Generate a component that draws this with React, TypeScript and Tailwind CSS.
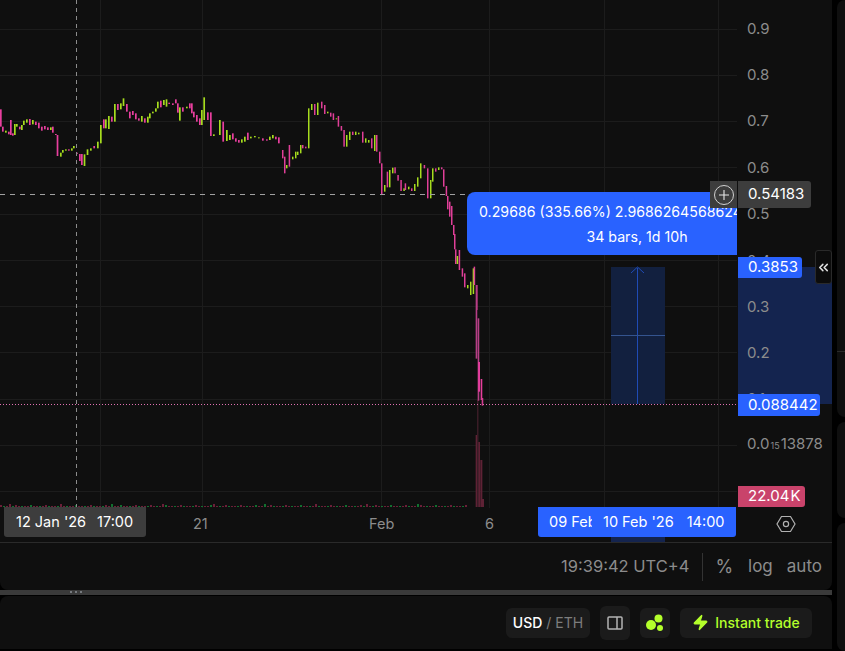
import React from 'react';
import { Zap, ChevronsLeft } from 'lucide-react';

type Candle = [number, number, number, number];

// traced from the chart, [x, top, bottom, green?] in 3x crop coordinates
const LEFT: Candle[] = [
  [0,88,140,0],[6,140,155,0],[15,152,158,1],[24,155,163,0],[30,120,165,0],[36,160,167,0],[42,132,165,1],[48,132,140,1],
  [57,140,148,0],[63,135,150,1],[69,122,135,1],[78,118,128,1],[87,117,135,0],[96,120,133,1],[105,125,135,0],[114,128,145,0],
  [123,140,152,0],[132,138,148,0],[141,142,150,0],[150,142,150,1],[156,140,158,0],[165,162,165,0],[170,165,228,0],[180,218,230,1],
  [186,210,218,1],[195,208,212,1],[204,208,212,0],[213,205,212,1],[219,198,205,1],[228,218,222,0],[237,222,243,0],[243,222,255,0],
  [251,223,258,1],[260,208,225,1],[270,205,212,1],[280,198,205,0],[291,185,205,1],[300,135,190,1],[309,118,145,0],[315,118,145,1],
  [324,108,147,1],[333,110,125,0],[342,72,125,1],[351,72,90,0],[360,70,88,1],[368,55,78,1],[378,72,95,0],[387,95,115,0],
  [396,93,105,0],[405,100,118,0],[414,115,122,0],[423,108,125,1],[432,115,128,0],[441,110,128,1],[447,100,115,1],[456,95,100,1],
  [465,85,95,1],[471,65,85,1],[480,62,82,0],[489,60,75,1],[497,58,80,1],[505,68,72,0],[516,70,75,0],[525,58,70,0],
  [531,70,98,0],[537,82,122,1],[546,82,95,0],[558,80,85,1],[567,70,85,0],[573,70,100,0],[579,95,112,0],[588,105,125,0],
  [597,115,135,0],[603,90,135,1],[610,52,120,1],[621,97,120,0],[630,97,168,0],[639,163,168,1],[657,120,165,1],[667,125,185,0],
  [678,150,183,1],[687,165,180,1],[696,160,178,0],[705,175,185,0],[714,180,188,0],[723,178,188,1],[732,170,185,1],[741,158,180,0],
  [750,170,175,1],[762,168,172,1],[774,172,175,1],[786,175,182,0],[798,178,182,0],[807,170,180,1],[816,165,175,1],[825,170,178,0],
  [834,172,190,0],
];

const MIDDLE: Candle[] = [
  [6,180,205,0],[12,200,250,0],[18,225,235,1],[26,165,230,0],[36,200,208,1],[45,185,205,1],[51,185,195,1],[60,165,190,1],
  [66,165,175,0],[75,170,175,0],[84,55,175,1],[93,42,60,1],[102,42,75,0],[111,38,75,1],[123,35,55,0],[132,45,72,0],
  [141,65,70,1],[150,68,80,0],[158,70,90,0],[167,85,88,1],[173,78,110,0],[182,108,122,0],[190,120,170,0],[198,135,170,1],
  [207,125,150,1],[216,125,135,0],[225,125,135,1],[234,128,133,1],[246,125,158,0],[255,145,158,1],[264,150,158,1],[273,145,175,0],
  [282,135,183,1],[288,135,185,0],[297,185,220,0],[303,220,312,0],[312,285,305,1],[320,245,292,0],[327,240,292,1],[336,233,250,1],
  [343,232,250,0],[352,255,272,0],[361,270,303,0],[370,295,303,1],[374,280,300,0],[384,290,298,1],[393,295,303,0],[402,282,303,1],
  [411,262,290,1],[420,220,265,1],[431,225,235,0],[441,235,325,0],[450,270,325,1],[456,235,275,1],[465,235,245,0],[474,232,240,1],
  [483,232,238,0],[489,238,290,0],[497,288,318,0],[501,318,358,0],[507,335,380,0],[513,348,405,0],[519,405,435,0],[522,432,478,0],
  [525,478,522,0],[530,498,522,1],[536,480,540,0],[545,535,560,0],[552,550,592,0],[561,585,595,1],[570,575,615,1],[578,535,612,1],
  [581,530,585,0],[588,585,660,0],
];

const DROP: [number, number, number, string][] = [
  [107, 15, 236, '#b63f86'],
  [113, 115, 362, '#b63f86'],
  [115, 246, 335, '#f23fa5'],
  [122, 297, 360, '#e83e9c'],
  [125, 354, 377, '#d23d90'],
];

const VOLUME: [number, number][] = [[107, 465], [114, 486], [121, 540], [126, 657]];
const GRID_Y = [29, 75, 121, 167, 214, 260, 306, 352, 399, 445, 491];
const GRID_X = [100, 202, 381, 489, 604, 718];
const TICKS = [
  ['0.9', 28], ['0.8', 74], ['0.7', 120], ['0.6', 167], ['0.5', 213], ['0.4', 260], ['0.3', 306], ['0.2', 352], ['0.1', 398],
] as const;

function Chart() {
  const small = Array.from({ length: 156 }, (_, i) => i * 3);
  return (
    <svg width="737" height="508" className="block">
      {GRID_Y.map((y) => (
        <line key={y} x1="0" x2="737" y1={y + 0.5} y2={y + 0.5} stroke="#1c1c1c" />
      ))}
      {GRID_X.map((x) => (
        <line key={x} x1={x + 0.5} x2={x + 0.5} y1="0" y2="508" stroke="#1c1c1c" />
      ))}

      {/* range tool */}
      <rect x="611" y="267" width="54" height="137" fill="#12203f" />
      <line x1="637.5" x2="637.5" y1="268" y2="404" stroke="#1f4bb5" />
      <line x1="611" x2="665" y1="335.5" y2="335.5" stroke="#34548f" />
      <path d="M631 273L637.5 267L644 273" fill="none" stroke="#1f4bb5" />

      {/* volume */}
      {small.map((x, i) => {
        const h = i % 17 === 3 ? 3 : i % 5 === 0 ? 2 : 1;
        const up = i % 3 === 1;
        return <rect key={x} x={x} y={507 - h} width="2" height={h} fill={up ? '#12702f' : '#6b2038'} />;
      })}
      {VOLUME.map(([x, top]) => (
        <rect key={x} x={440 + x / 3} y={280 + top / 3} width="2" height={507 - 280 - top / 3} fill="#5e2235" />
      ))}
      <rect x="477" y="400" width="1.5" height="107" fill="#3a1c26" />

      {/* candles */}
      {LEFT.map(([x, a, b, g]) => (
        <rect key={`l${x}`} x={x / 3} y={80 + a / 3} width="1.7" height={(b - a) / 3} fill={g ? '#a6dc1e' : '#e83f9e'} />
      ))}
      {MIDDLE.map(([x, a, b, g]) => (
        <rect key={`m${x}`} x={280 + x / 3} y={90 + a / 3} width="1.5" height={(b - a) / 3} fill={g ? '#a6dc1e' : '#e03f98'} />
      ))}
      {DROP.map(([x, a, b, c]) => (
        <rect key={`d${x}`} x={440 + x / 3} y={280 + a / 3} width="1.6" height={(b - a) / 3} fill={c} />
      ))}

      {/* crosshair and last price */}
      <line x1="76.5" x2="76.5" y1="0" y2="508" stroke="#8c8c8c" strokeDasharray="4 4" />
      <line x1="0" x2="710" y1="194.5" y2="194.5" stroke="#a0a0a0" strokeDasharray="5 5" />
      <line x1="0" x2="737" y1="404.5" y2="404.5" stroke="#e070b0" strokeDasharray="1 2" />
    </svg>
  );
}

function PriceAxis() {
  return (
    <div className="relative h-[508px] w-[95px] text-[15px] text-[#8c8c8c]">
      <div className="absolute left-[1px] right-0 top-[267px] h-[137px] bg-[#14244f]" />
      {TICKS.map(([label, y]) => (
        <span key={label} className="absolute left-[10px] leading-none" style={{ top: y - 7 }}>
          {label}
        </span>
      ))}
      <span className="absolute left-[10px] top-[436px] whitespace-nowrap leading-none">
        0.0<span className="mx-[1px] text-[9px]">15</span>13878
      </span>
      <div className="absolute left-[1px] top-[181px] flex h-[27px] w-[73px] items-center rounded-r-[3px] bg-[#3d3d3d] pl-[10px] text-white">
        0.54183
      </div>
      <div className="absolute left-[1px] top-[257px] flex h-[21px] w-[64px] items-center rounded-r-[3px] bg-[#2962ff] pl-[10px] text-white">
        0.3853
      </div>
      <div className="absolute left-[1px] top-[394px] flex h-[22px] w-[82px] items-center rounded-r-[3px] bg-[#2962ff] pl-[10px] text-white">
        0.088442
      </div>
      <div className="absolute left-[1px] top-[486px] flex h-[21px] w-[67px] items-center rounded-r-[3px] bg-[#c9436b] pl-[10px] text-white">
        22.04<span className="ml-[1px]">K</span>
      </div>
      <div className="absolute right-0 top-[250px] flex h-[34px] w-[17px] items-center justify-center rounded-[3px] border border-[#2a2a2a] bg-[#0c0c0c] text-[#e0e0e0]">
        <ChevronsLeft size={15} strokeWidth={2.4} />
      </div>
    </div>
  );
}

function TimeAxis() {
  return (
    <div className="flex h-[34px]">
      <div className="relative h-full w-[737px] text-[14.5px] text-[#8c8c8c]">
        <span className="absolute left-[193px] top-[9px] leading-none">21</span>
        <span className="absolute left-[369px] top-[9px] leading-none">Feb</span>
        <span className="absolute left-[485px] top-[9px] leading-none">6</span>
        <div className="absolute left-[611px] top-[29px] h-[5px] w-[54px] bg-[#14244f]" />
        <div className="absolute left-[4px] top-[-1px] flex h-[30px] w-[142px] items-center gap-[11px] rounded-b-[3px] bg-[#3d3d3d] pl-[12px] text-white">
          <span className="whitespace-nowrap">12 Jan '26</span>
          <span>17:00</span>
        </div>
        <div className="absolute left-[538px] top-[-1px] flex h-[30px] w-[198px] items-center rounded-b-[3px] bg-[#2962ff] pl-[11px] text-white">
          <span className="w-[43px] shrink-0 overflow-hidden whitespace-nowrap">09 Feb</span>
          <span className="ml-[11px] whitespace-nowrap">10 Feb '26</span>
          <span className="ml-[13px]">14:00</span>
        </div>
      </div>
      <div className="flex w-[95px] items-center justify-center pb-[3px] pl-[2px]">
        <svg width="20" height="18" viewBox="0 0 20 18" fill="none" stroke="#b0b0b0" strokeWidth="1.2">
          <path d="M5.5 1.5H14.5L19 9L14.5 16.5H5.5L1 9Z" />
          <circle cx="10" cy="9" r="2.6" />
        </svg>
      </div>
    </div>
  );
}

export default function App() {
  return (
    <div className="flex h-[651px] w-[845px] overflow-hidden bg-black font-['Inter',sans-serif]">
      <div className="flex w-[832px] shrink-0 flex-col">
        <div className="h-[590px] shrink-0 rounded-b-lg bg-[#0f0f0f]">
          <div className="flex h-[508px]">
            <div className="relative h-[508px] w-[737px] overflow-hidden">
              <Chart />
              <div className="absolute left-[467px] top-[192px] h-[63px] w-[270px] overflow-hidden rounded-l-lg bg-[#2962ff] text-[14.2px] text-white">
                <div className="whitespace-nowrap pl-[12px] pt-[11px] leading-[18px]">0.29686 (335.66%) 2.9686264568624</div>
                <div className="mt-[7px] pl-[70px] text-center leading-[18px]">34 bars, 1d 10h</div>
              </div>
              <div className="absolute left-[710px] top-[181px] flex h-[27px] w-[27px] items-center justify-center bg-[#3d3d3d]">
                <div className="flex h-[20px] w-[20px] items-center justify-center rounded-full border border-[#d0d0d0]">
                  <svg width="10" height="10" viewBox="0 0 10 10" stroke="#e8e8e8" strokeWidth="1.1">
                    <path d="M5 0V10M0 5H10" />
                  </svg>
                </div>
              </div>
            </div>
            <PriceAxis />
          </div>
          <TimeAxis />
          <div className="flex h-[48px] items-center justify-end border-t border-[#2a2a2a] pr-[10px] text-[17px] text-[#8c8c8c]">
            <span className="mr-[13px] text-[16.5px]">19:39:42 UTC+4</span>
            <div className="mr-[12px] h-[28px] w-px bg-[#333333]" />
            <span className="mr-[15px] text-[18px]">%</span>
            <span className="mr-[14px]">log</span>
            <span>auto</span>
          </div>
        </div>
        <div className="h-[5px] shrink-0 bg-[#3a3a3a] pl-[70px]">
          <div className="flex h-full items-start gap-[3px] pt-[1px]">
            <i className="h-[2px] w-[2px] rounded-full bg-[#8a8f96]" />
            <i className="h-[2px] w-[2px] rounded-full bg-[#8a8f96]" />
            <i className="h-[2px] w-[2px] rounded-full bg-[#8a8f96]" />
          </div>
        </div>
        <div className="mt-[1px] flex h-[53px] items-center justify-end gap-[10px] rounded-t-lg bg-[#0f0f0f] pr-[20px]">
          <div className="flex h-[30px] w-[84px] items-center justify-center rounded-md bg-[#1b1b1b] text-[14px] font-medium text-white">
            USD<span className="ml-[4px] font-normal text-[#7d7d7d]">/ ETH</span>
          </div>
          <div className="flex h-[34px] w-[30px] items-center justify-center rounded-md bg-[#1b1b1b]">
            <svg width="16" height="14" viewBox="0 0 16 14" fill="none" stroke="#b4b4b4" strokeWidth="1.5">
              <rect x="1" y="1" width="14" height="12" rx="1" />
              <path d="M10 1V13" />
            </svg>
          </div>
          <div className="flex h-[30px] w-[30px] items-center justify-center rounded-md bg-[#1b1b1b]">
            <svg width="20" height="18" viewBox="0 0 20 18" fill="#b4ff2b">
              <circle cx="6" cy="11" r="5" />
              <circle cx="13.5" cy="4.5" r="4" />
              <circle cx="15" cy="14" r="3" />
            </svg>
          </div>
          <div className="flex h-[30px] w-[132px] items-center justify-center gap-[6px] rounded-md bg-[#1b1b1b] text-[14px] font-medium text-[#b4ff2b]">
            <Zap size={17} fill="#b4ff2b" strokeWidth={1.5} />
            Instant trade
          </div>
        </div>
      </div>
      <div className="ml-[5px] flex flex-1 flex-col gap-[5px]">
        <div className="h-[417px] rounded-l-lg bg-[#0f0f0f] pt-[351px]">
          <div className="h-px bg-[#2a2a2a]" />
        </div>
        <div className="h-[96px] rounded-l-lg bg-[#0f0f0f]" />
        <div className="flex-1 rounded-l-lg bg-[#0f0f0f]" />
      </div>
    </div>
  );
}
